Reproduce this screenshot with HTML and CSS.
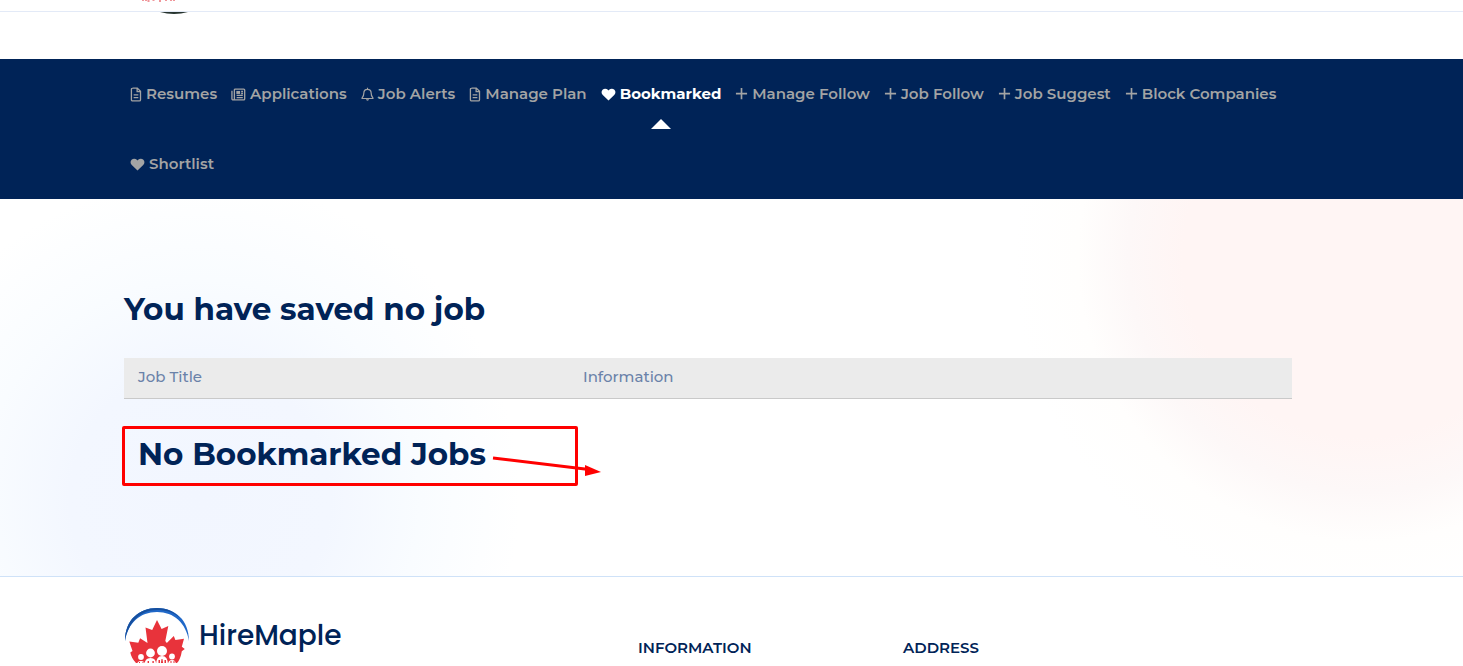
FILE: index.html
```html
<!DOCTYPE html>
<html lang="en">
<head>
<meta charset="utf-8">
<title>HireMaple - Bookmarked Jobs</title>
<link rel="stylesheet" href="styles.css">
</head>
<body>
<svg class="sprite" aria-hidden="true">
  <symbol id="file" viewBox="0 0 12 16"><path d="M2.2 1.2h5.2l3.4 3.4v8.9q0 1.3-1.3 1.3H2.4q-1.3 0-1.3-1.3V2.5q0-1.3 1.3-1.3zM7.2 1.4v3.5h3.4M3.5 8.4h5M3.5 11.4h5" fill="none" stroke="currentColor" stroke-width="1.4"/></symbol>
  <symbol id="news" viewBox="0 0 16 16"><path d="M3.6 3.2q0-1 1-1h9q1 0 1 1v9.6q0 1-1 1H2.3q-1.3 0-1.3-1.3V4M3.6 3v9.500q0 1.300-1.300 1.300M6 11.300h6.600M6 9h6.600M10.800 4.800h2M10.800 6.900h2" fill="none" stroke="currentColor" stroke-width="1.4"/><path d="M5.700 4.200h4v3.200h-4z" fill="currentColor"/></symbol>
  <symbol id="bell" viewBox="0 0 14 16"><path d="M7 .7v1.600M7 2.400c-2.400 0-3.900 1.600-3.900 3.800 0 3.500-.9 4.200-2 5.500v.6h11.800v-.6c-1.100-1.300-2-2-2-5.500C10.900 4 9.400 2.400 7 2.400z" fill="none" stroke="currentColor" stroke-width="1.300" stroke-linejoin="round"/><path d="M5.300 13.200h3.400q-.3 1.500-1.700 1.500t-1.700-1.500z" fill="currentColor"/></symbol>
  <symbol id="heart" viewBox="0 0 16 16"><path d="M8 14.500 1.900 8.500C.2 6.800.2 4.300 1.700 2.900 3.400 1.300 5.900 1.600 7.300 3L8 3.800 8.700 3c1.400-1.400 3.900-1.700 5.600-.1 1.500 1.400 1.500 3.900-.2 5.600z" fill="currentColor"/></symbol>
  <symbol id="plus" viewBox="0 0 14 16"><path d="M7 1v12M1 7h12" fill="none" stroke="currentColor" stroke-width="1.800"/></symbol>
  <symbol id="maple" viewBox="0 0 66 58">
    <path d="M1 34C1 13 15 1 33 1s32 12 32 33C62 16 50 5 33 5S4 16 1 34z" fill="#2068c8"/>
    <path d="M1 34C1 13 15 1 33 1c10 0 18 4 23 10C49 5 42 3 33 3 16 3 4 16 1 34z" fill="#164f9e"/>
    <path d="M33 13l4.600 9 6.700-3-3 15 1.500 2 7-7 1.600 4 8.600-1.300-2.200 8 3 2.300-3 2.200C57 50 55 54 53 56H12C9 53 7 49 6.300 45.500L8.500 44 5.300 34.500l9 1.300 1.800-4.500 7.400 4.700-2-15.400 6.700 2.400z" fill="#e8333b"/>
    <g fill="#fff"><circle cx="26.500" cy="46" r="4.400"/><circle cx="38" cy="44" r="5"/><circle cx="17" cy="50" r="2.900"/><circle cx="48" cy="49.500" r="2.900"/>
    <path d="M13 58q0-4 4-4t4 4zM20.500 58q0-7 6-7t5.500 7zM32 58q0-9 6-9t6 9zM44 58q0-5 4-5t4 5z"/></g>
    <g fill="#e8333b"><path d="M23.600 54h1.400v2h-1.400zM28.400 54h1.400v2h-1.400zM34.500 53h1.500v3h-1.500zM40.500 53h1.500v3h-1.500zM37.500 52h1l.6 4h-2.200zM15 55h1v1h-1zM18.500 55h1v1h-1zM46.500 54h1v2h-1zM49.500 54h1v2h-1z"/></g>
  </symbol>
</svg>

<header class="header">
  <div class="container header-inner">
    <svg class="header-logo" viewBox="0 0 56 3" aria-hidden="true"><path d="M11 0v1M14 0v1M16.500 0v2M21.500 0v1M28 0v2M34 0v1M39 0v1M42 0v1" stroke="#f0969a" stroke-width="2"/></svg>
  </div>
</header>
<div class="profile-strip">
  <div class="container"><svg class="avatar-edge" viewBox="0 0 28 2" aria-hidden="true"><path d="M0 0h28Q14 4 0 0z" fill="#26342f"/></svg></div>
</div>

<nav class="account-nav" aria-label="Account">
  <ul class="container nav-list">
    <li><a class="nav-link" href="#"><svg class="icon icon-file"><use href="#file"/></svg>Resumes</a></li>
    <li><a class="nav-link" href="#"><svg class="icon icon-wide"><use href="#news"/></svg>Applications</a></li>
    <li><a class="nav-link" href="#"><svg class="icon"><use href="#bell"/></svg>Job Alerts</a></li>
    <li><a class="nav-link" href="#"><svg class="icon icon-file"><use href="#file"/></svg>Manage Plan</a></li>
    <li><a class="nav-link active" href="#" aria-current="page"><svg class="icon icon-wide"><use href="#heart"/></svg>Bookmarked</a></li>
    <li><a class="nav-link" href="#"><svg class="icon"><use href="#plus"/></svg>Manage Follow</a></li>
    <li><a class="nav-link" href="#"><svg class="icon"><use href="#plus"/></svg>Job Follow</a></li>
    <li><a class="nav-link" href="#"><svg class="icon"><use href="#plus"/></svg>Job Suggest</a></li>
    <li><a class="nav-link" href="#"><svg class="icon"><use href="#plus"/></svg>Block Companies</a></li>
    <li><a class="nav-link" href="#"><svg class="icon icon-wide"><use href="#heart"/></svg>Shortlist</a></li>
  </ul>
</nav>

<main class="main">
  <div class="container">
    <h1 class="title">You have saved no job</h1>
    <table class="jobs">
      <thead><tr><th class="col-title" scope="col">Job Title</th><th scope="col">Information</th></tr></thead>
      <tbody><tr><td colspan="2">
        <div class="empty">
          <h2 class="title">No Bookmarked Jobs</h2>
          <svg class="arrow" viewBox="0 0 112 24" aria-hidden="true"><path d="M2 4l96 11.500" stroke="#f00" stroke-width="3"/><path d="M94 11l16 7-16 4z" fill="#f00"/></svg>
        </div>
      </td></tr></tbody>
    </table>
  </div>
</main>

<footer class="footer">
  <div class="container footer-grid">
    <a class="brand" href="#"><svg class="brand-mark" aria-hidden="true"><use href="#maple"/></svg>HireMaple</a>
    <h3 class="footer-title">INFORMATION</h3>
    <h3 class="footer-title">ADDRESS</h3>
  </div>
</footer>
</body>
</html>
```
FILE: styles.css
```css
* { box-sizing: border-box; }
body {
  margin: 0;
  background: #fff;
  color: #002357;
  font-family: Montserrat, Inter, "Open Sans", sans-serif;
  font-size: 15px;
  line-height: 20px;
}
h1, h2, h3, ul { margin: 0; padding: 0; }
a { color: inherit; text-decoration: none; }
svg { display: block; flex: none; }
.sprite { position: absolute; width: 0; height: 0; }
.container {
  width: calc(100% - 295px);
  margin-left: 124px;
}
.header { height: 12px; border-bottom: 1px solid #e3eaf7; }
.header-logo { width: 56px; height: 3px; margin-left: 8px; }
.profile-strip { height: 47px; }
.avatar-edge { width: 28px; height: 2px; margin-left: 36px; }

.account-nav { background: #002357; }
.nav-list {
  display: flex;
  flex-wrap: wrap;
  column-gap: 14px;
  padding-left: 6px;
  list-style: none;
}
.nav-link {
  position: relative;
  display: flex;
  align-items: center;
  gap: 4px;
  height: 70px;
  color: #a3a4a4;
  font-weight: 600;
  white-space: nowrap;
}
.icon { width: 13px; height: 15px; }
.icon-file { width: 12px; }
.icon-wide { width: 15px; }
.active { color: #fff; font-weight: 700; }
.active::after {
  content: "";
  position: absolute;
  bottom: 0;
  left: 50%;
  margin-left: -10px;
  border: solid transparent;
  border-width: 0 10px 10px;
  border-bottom-color: #fff;
}

.main {
  padding: 90px 0;
  border-bottom: 1px solid #cfe2f8;
  background:
    radial-gradient(circle at 200px 300px, #f2f6ff 0, #f3f7ff 130px, #f9fcff 220px, #fff0 320px),
    radial-gradient(circle at calc(100% - 100px) 58px, #fff5f4 0, #fff5f4 180px, #fdf8f8 235px, #fffefd 285px, #fff 350px);
}
.title { font-size: 31px; line-height: 40px; font-weight: 700; }
.jobs { width: 100%; margin-top: 29px; border-collapse: collapse; }
.jobs th {
  padding: 9px 14px 11px;
  background: #ebebeb;
  border-bottom: 1px solid #c9c9c9;
  color: #6a82a9;
  font-weight: 500;
  text-align: left;
}
.jobs .col-title { width: 445px; }
.jobs td { padding: 27px 0 0; }
.empty {
  position: relative;
  width: 456px;
  margin-left: -2px;
  padding: 5px 13px 9px;
  border: 3px solid #f00;
  border-radius: 2px;
}
.arrow { position: absolute; left: 366px; top: 25px; width: 112px; height: 24px; }

.footer-grid {
  display: grid;
  grid-template-columns: 514px 265px 1fr;
  padding-top: 30px;
}
.brand {
  display: flex;
  align-items: center;
  gap: 9px;
  font-family: Poppins, Montserrat, Inter, sans-serif;
  font-size: 28px;
  font-weight: 500;
}
.brand-mark { width: 66px; height: 58px; }
.footer-title { padding-top: 31px; font-size: 15px; font-weight: 600; }
```
